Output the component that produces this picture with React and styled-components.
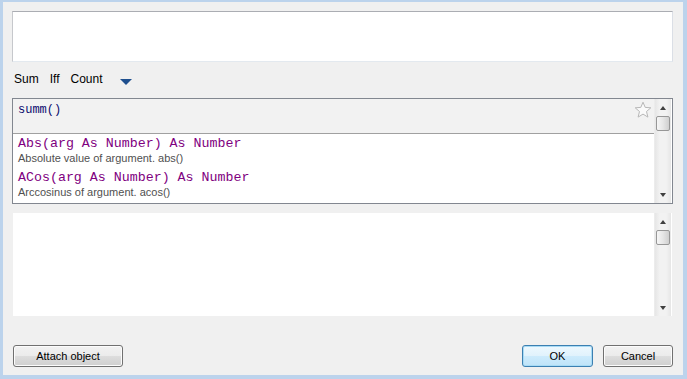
import React from 'react';
import styled, { createGlobalStyle } from 'styled-components';

const GlobalStyle = createGlobalStyle`
  html, body {
    margin: 0;
    padding: 0;
    background: #bcd3ec;
  }
  body {
    font-family: "Liberation Sans", Arial, sans-serif;
  }
`;

const Frame = styled.div`
  width: 687px;
  height: 379px;
  box-sizing: border-box;
  padding: 2px 4px 4px 3px;
  background: #bcd3ec;
`;

const Dialog = styled.div`
  height: 100%;
  background: #f0f0f0;
  box-sizing: border-box;
  padding: 9px 10px 0 9px;
  display: flex;
  flex-direction: column;
`;

const TextBox = styled.div`
  height: 51px;
  box-sizing: border-box;
  background: #fff;
  border: 1px solid #e3e9ef;
  border-top-color: #abadb3;
  border-left-color: #c6c8cc;
  border-right-color: #dbdfe6;
`;

const Toolbar = styled.div`
  height: 18px;
  margin-top: 8px;
  padding-left: 2px;
  display: flex;
  align-items: center;
  gap: 11px;
  font-size: 12px;
  color: #000;
`;

const ToolItem = styled.span`
  line-height: 18px;
`;

const DropArrow = styled.span`
  margin-left: 6px;
  margin-top: 5px;
  width: 0;
  height: 0;
  border-left: 6px solid transparent;
  border-right: 6px solid transparent;
  border-top: 6px solid #1e4f8e;
`;

const ListBox = styled.div`
  margin-top: 10px;
  height: 106px;
  box-sizing: border-box;
  border: 1px solid #828790;
  display: flex;
  background: #fff;
`;

const ListMain = styled.div`
  flex: 1;
  display: flex;
  flex-direction: column;
  min-width: 0;
`;

const Header = styled.div`
  height: 35px;
  box-sizing: border-box;
  background: #f2f2f2;
  border-bottom: 1px solid #a0a0a0;
  position: relative;
  padding: 0 0 0 5px;
`;

const Expression = styled.span`
  font-family: "Liberation Mono", "Courier New", monospace;
  font-size: 12px;
  line-height: 14px;
  color: #0c0c6e;
`;

const StarIcon = styled.svg`
  position: absolute;
  right: 2px;
  top: 2px;
`;

const Items = styled.div`
  padding: 2px 0 0 5px;
  overflow: hidden;
`;

const Item = styled.div`
  margin-bottom: 5px;
`;

const Signature = styled.div`
  font-family: "Liberation Mono", "Courier New", monospace;
  font-size: 13.3px;
  line-height: 15px;
  color: #800080;
`;

const Description = styled.div`
  font-size: 11px;
  line-height: 14px;
  color: #505050;
`;

const Scrollbar = styled.div`
  width: 16px;
  margin-right: 1px;
  display: flex;
  flex-direction: column;
  align-items: center;
  background: linear-gradient(to right, #e6e6e6, #f2f2f2 30%, #f2f2f2 70%, #e6e6e6);
  border-left: 1px solid #ececec;
`;

const ArrowBox = styled.div`
  height: 17px;
  width: 100%;
  display: flex;
  align-items: center;
  justify-content: center;
`;

const Arrow = styled.span`
  width: 0;
  height: 0;
  border-left: 3.5px solid transparent;
  border-right: 3.5px solid transparent;
  ${p => p.$down
    ? 'border-top: 4px solid #404040;'
    : 'border-bottom: 4px solid #404040;'}
`;

const Thumb = styled.div`
  width: 14px;
  height: 15px;
  box-sizing: border-box;
  border: 1px solid #979797;
  border-radius: 2px;
  background: linear-gradient(to right, #f6f6f6, #e6e6e6 50%, #cfcfcf);
`;

const Track = styled.div`
  flex: 1;
`;

const NotesBox = styled.div`
  margin-top: 9px;
  margin-left: 1px;
  margin-right: 1px;
  height: 103px;
  display: flex;
  background: #fff;
`;

const NotesArea = styled.div`
  flex: 1;
`;

const Footer = styled.div`
  margin-top: 29px;
  padding-left: 1px;
  display: flex;
  align-items: center;
`;

const Button = styled.button`
  height: 22px;
  width: ${p => p.$width}px;
  box-sizing: border-box;
  padding: 0;
  font-family: "Liberation Sans", Arial, sans-serif;
  font-size: 11px;
  color: #000;
  border-radius: 3px;
  border: 1px solid ${p => (p.$primary ? '#3c7fb1' : '#707070')};
  background: ${p =>
    p.$primary
      ? 'linear-gradient(to bottom, #eef8fe 0%, #e0f2fc 50%, #cdebfc 51%, #bfe3f8 100%)'
      : 'linear-gradient(to bottom, #f2f2f2 0%, #ebebeb 50%, #dddddd 51%, #cfcfcf 100%)'};
  box-shadow: inset 0 0 0 1px ${p => (p.$primary ? '#a8dbf5' : '#fcfcfc')};
  margin-left: ${p => p.$gap || 0}px;
`;

const Spacer = styled.div`
  flex: 1;
`;

const Star = () => (
  <StarIcon width="18" height="18" viewBox="0 0 18 18">
    <path
      d="M9 1.2 L11.2 6.4 L16.8 6.8 L12.5 10.5 L13.9 16.1 L9 13.1 L4.1 16.1 L5.5 10.5 L1.2 6.8 L6.8 6.4 Z"
      fill="#fafafa"
      stroke="#b8b8b8"
      strokeWidth="1"
      strokeLinejoin="round"
    />
  </StarIcon>
);

const ScrollBar = () => (
  <Scrollbar>
    <ArrowBox>
      <Arrow />
    </ArrowBox>
    <Thumb />
    <Track />
    <ArrowBox>
      <Arrow $down />
    </ArrowBox>
  </Scrollbar>
);

const functions = [
  { sig: 'Abs(arg As Number) As Number', desc: 'Absolute value of argument. abs()' },
  { sig: 'ACos(arg As Number) As Number', desc: 'Arccosinus of argument. acos()' },
];

export default function App() {
  return (
    <>
      <GlobalStyle />
      <Frame>
        <Dialog>
          <TextBox />
          <Toolbar>
            <ToolItem>Sum</ToolItem>
            <ToolItem>Iff</ToolItem>
            <ToolItem>Count</ToolItem>
            <DropArrow />
          </Toolbar>
          <ListBox>
            <ListMain>
              <Header>
                <Expression>summ()</Expression>
                <Star />
              </Header>
              <Items>
                {functions.map(f => (
                  <Item key={f.sig}>
                    <Signature>{f.sig}</Signature>
                    <Description>{f.desc}</Description>
                  </Item>
                ))}
              </Items>
            </ListMain>
            <ScrollBar />
          </ListBox>
          <NotesBox>
            <NotesArea />
            <ScrollBar />
          </NotesBox>
          <Footer>
            <Button $width={110}>Attach object</Button>
            <Spacer />
            <Button $width={71} $primary>OK</Button>
            <Button $width={70} $gap={10}>Cancel</Button>
          </Footer>
        </Dialog>
      </Frame>
    </>
  );
}
